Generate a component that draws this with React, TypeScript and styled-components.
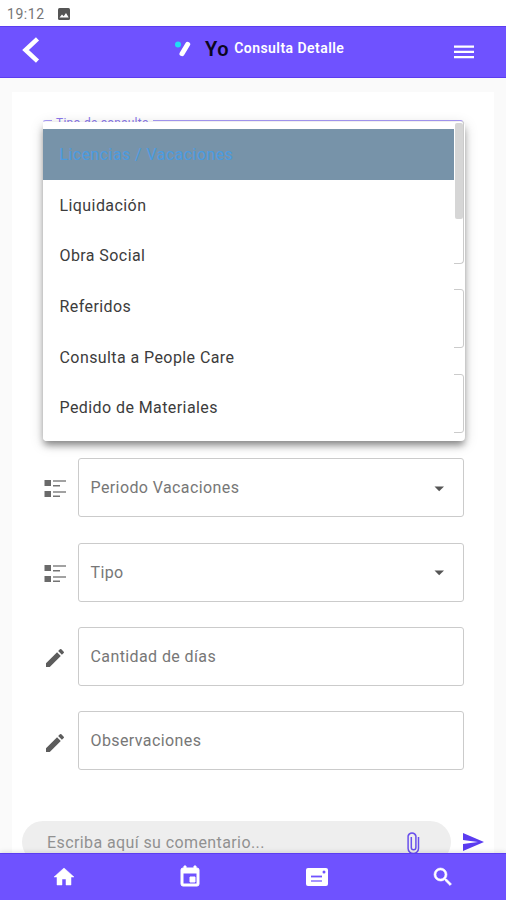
import React from "react";
import styled, { createGlobalStyle } from "styled-components";

const Global = createGlobalStyle`
  * { box-sizing: border-box; }
  body { margin: 0; background: #fff; font-family: Roboto, "Liberation Sans", sans-serif; }
`;

const Screen = styled.div`
  width: 506px;
  height: 900px;
  display: flex;
  flex-direction: column;
  overflow: hidden;
  background: #fafafa;
`;

const StatusBar = styled.div`
  flex: 0 0 26px;
  display: flex;
  align-items: center;
  gap: 13px;
  padding: 1px 0 0 7px;
  background: #fff;
  color: #767676;
  font-size: 14px;
  letter-spacing: 0.55px;
`;

const Header = styled.header`
  flex: 0 0 52px;
  display: grid;
  grid-template-columns: 174px 1fr 53px;
  align-items: center;
  background: #6f52ff;
  border-top: 1px solid #5b3df0;
  border-bottom: 1px solid #5b3df0;
  color: #fff;
`;

const BackButton = styled.button`
  display: flex;
  padding: 0 0 5px 22px;
  border: 0;
  background: none;
`;

const MenuButton = styled.button`
  display: flex;
  padding: 0;
  border: 0;
  background: none;
`;

const Brand = styled.div`
  display: flex;
  align-items: center;
  height: 42px;
  padding-bottom: 6px;
`;

const BrandName = styled.span`
  margin-left: 13px;
  color: #0b0620;
  font-size: 20px;
  font-weight: 600;
  letter-spacing: 0.6px;
`;

const Title = styled.h1`
  margin: 0 0 0 5px;
  padding-bottom: 2px;
  font-size: 14px;
  font-weight: 600;
  letter-spacing: 0.45px;
  white-space: nowrap;
`;

const Main = styled.main`
  flex: 1;
  min-height: 0;
  overflow: hidden;
  padding: 14px 12px 0;
`;

const Card = styled.section`
  height: 800px;
  padding: 29px 30px 0 30px;
  background: #fff;
`;

const Form = styled.div`
  position: relative;
  display: flex;
  flex-direction: column;
  gap: 25.4px;
`;

const FieldRow = styled.div`
  display: grid;
  grid-template-columns: 36px 386px;
  align-items: center;
  height: 59px;
`;

const FieldIcon = styled.span<{ $select: boolean }>`
  display: flex;
  padding: ${(p) => (p.$select ? "1px" : "4px")} 0 0 1px;
`;

const Outline = styled.div`
  display: flex;
  align-items: center;
  justify-content: space-between;
  height: 59px;
  padding: 0 18px 0 11.5px;
  border: 1px solid #cbcbcb;
  border-radius: 3px;
  color: #777;
  font-size: 16px;
  letter-spacing: 0.4px;
`;

const ActiveOutline = styled.fieldset`
  width: 422px;
  height: 149px;
  margin: -6px 0 0;
  padding: 0 0 0 9px;
  border: 1px solid;
  border-color: #a99bf8 #cbcbcb #cbcbcb transparent;
  border-radius: 4px;
`;

const ActiveLabel = styled.legend`
  height: 11px;
  padding: 0 4px;
  color: #8b78ec;
  font-size: 12px;
  line-height: 16px;
  letter-spacing: 0.25px;
`;

const Popup = styled.div`
  position: absolute;
  top: 1px;
  left: 1px;
  display: flex;
  width: 422px;
  height: 319px;
  border-radius: 4px;
  box-shadow: 0 5px 7px -1px rgba(0, 0, 0, 0.4), 0 3px 14px rgba(0, 0, 0, 0.17);
`;

const Options = styled.div`
  width: 411px;
  padding-top: 7px;
  background: #fff;
  border-radius: 0 0 0 4px;
`;

const Option = styled.div<{ $selected?: boolean }>`
  height: 50.7px;
  padding: 0 16.5px;
  line-height: 51px;
  font-size: 16px;
  letter-spacing: 0.42px;
  color: ${(p) => (p.$selected ? "#4b9be0" : "#3c3c3c")};
  background: ${(p) => (p.$selected ? "#7793a9" : "transparent")};
`;

const ScrollThumb = styled.div`
  width: 8px;
  height: 96px;
  margin: 1px 0 0 1px;
  border-radius: 2px;
  background: #d6d6d6;
`;

const Composer = styled.div`
  display: flex;
  align-items: center;
  gap: 10px;
  width: 465px;
  margin: 51px 0 0 -20px;
`;

const CommentBox = styled.div`
  flex: 0 0 429px;
  display: flex;
  align-items: center;
  justify-content: space-between;
  height: 42px;
  padding: 0 30px 0 25px;
  border-radius: 24px;
  background: #eee;
  color: #919191;
  font-size: 16px;
  letter-spacing: 0.4px;
`;

const NavBar = styled.nav`
  z-index: 1;
  flex: 0 0 47px;
  display: grid;
  grid-template-columns: repeat(4, 1fr);
  justify-items: center;
  align-items: center;
  padding-left: 1px;
  background: #6f52ff;
  border-top: 1px solid #5b3df0;
  box-shadow: 0 -1px 5px rgba(0, 0, 0, 0.12);
  color: #fff;
`;

const Glyph = ({ d, color = "currentColor", weight = 0 }: { d: string; color?: string; weight?: number }) => (
  <svg width="24" height="24" viewBox="0 0 24 24" fill={color} stroke={color} strokeWidth={weight}>
    <path d={d} />
  </svg>
);

const pencil =
  "M3 17.25V21h3.75L17.81 9.94l-3.75-3.75L3 17.25zM20.71 7.04a1 1 0 0 0 0-1.41l-2.34-2.34a1 1 0 0 0-1.41 0l-1.83 1.83 3.75 3.75 1.83-1.83z";

const ListIcon = () => (
  <svg width="24" height="20" viewBox="0 0 24 20">
    <path fill="#6a6a6a" d="M1.5 2h6.5v6H1.5zM1.5 13h6.5v6H1.5z" />
    <path fill="#a2a2a2" d="M10 2h13v2H10zM10 13h13v2H10z" />
    <path fill="#747474" d="M10 7h7v1.5h-7zM10 17.5h7v1.5h-7z" />
  </svg>
);

const fields = [
  { label: "", select: true },
  { label: "", select: true },
  { label: "Periodo Vacaciones", select: true },
  { label: "Tipo", select: true },
  { label: "Cantidad de días", select: false },
  { label: "Observaciones", select: false },
];

const options = [
  "Licencias / Vacaciones",
  "Liquidación",
  "Obra Social",
  "Referidos",
  "Consulta a People Care",
  "Pedido de Materiales",
];

export default function App() {
  return (
    <>
      <Global />
      <Screen>
        <StatusBar>
          19:12
          <svg width="12" height="12" viewBox="0 0 12 12">
            <rect width="12" height="12" rx="1.5" fill="#555" />
            <path d="M1.5 9.5 4 6.5l1.7 1.8L8 5l2.7 4.5z" fill="#fff" />
          </svg>
        </StatusBar>
        <Header>
          <BackButton aria-label="Volver">
            <svg width="18" height="26" viewBox="0 0 18 26" fill="none" stroke="#fff" strokeWidth="4.5">
              <path d="M15.5 1.8 3.5 13l12 11.2" />
            </svg>
          </BackButton>
          <Brand>
            <svg width="18" height="18" viewBox="0 0 18 18">
              <circle cx="4" cy="4.5" r="3" fill="#20dcf5" />
              <path d="M8 13.7 13.7 4.3" stroke="#fff" strokeWidth="5" strokeLinecap="round" />
            </svg>
            <BrandName>Yo</BrandName>
            <Title>Consulta Detalle</Title>
          </Brand>
          <MenuButton aria-label="Menú">
            <svg width="22" height="16" viewBox="0 0 22 16">
              <path d="M1 1.5h20v2.3H1zM1 6.7h20V9H1zM1 11.9h20v2.3H1z" fill="#fff" />
            </svg>
          </MenuButton>
        </Header>
        <Main>
          <Card>
            <Form>
              <ActiveOutline>
                <ActiveLabel>Tipo de consulta</ActiveLabel>
              </ActiveOutline>
              {fields.map((f, i) => (
                <FieldRow key={i}>
                  <FieldIcon $select={f.select}>
                    {f.select ? <ListIcon /> : <Glyph d={pencil} color="#5c5c5c" />}
                  </FieldIcon>
                  <Outline>
                    {f.label}
                    {f.select && f.label && (
                      <svg width="12" height="8" viewBox="0 0 12 8">
                        <path d="M1.5 2.5h9.5L6.2 7.2z" fill="#555" />
                      </svg>
                    )}
                  </Outline>
                </FieldRow>
              ))}
              <Popup>
                <Options>
                  {options.map((o, i) => (
                    <Option key={o} $selected={i === 0}>
                      {o}
                    </Option>
                  ))}
                </Options>
                <ScrollThumb />
              </Popup>
            </Form>
            <Composer>
              <CommentBox>
                Escriba aquí su comentario...
                <svg width="16" height="25" viewBox="0 0 16 25" fill="none" stroke="#6a50ec" strokeWidth="1.5">
                  <path d="M13.5 7v11.5a5.2 5 0 0 1-10.4 0V6a4 4 0 0 1 7.8 0v11.5a2.3 2.3 0 0 1-4.6 0V7" />
                </svg>
              </CommentBox>
              <Glyph d="M2 21 23 12 2 3v7l15 2-15 2z" color="#5b3cf0" />
            </Composer>
          </Card>
        </Main>
        <NavBar>
          <Glyph d="M10 20v-6h4v6h5v-8h3L12 3 2 12h3v8z" weight={0.5} />
          <Glyph
            d="M17 12h-5v5h5v-5zM16 1v2H8V1H6v2H5a2 2 0 0 0-2 2v14a2 2 0 0 0 2 2h14a2 2 0 0 0 2-2V5a2 2 0 0 0-2-2h-1V1h-2zm3 18H5V8h14v11z"
            weight={1}
          />
          <svg width="24" height="24" viewBox="0 0 24 24">
            <rect x="1" y="3" width="22" height="18" rx="2" fill="#fff" />
            <path d="M6 11.5h11" stroke="#6f52ff" strokeWidth="1.8" />
            <path d="M6 16h11" stroke="#a594ff" strokeWidth="2" />
            <circle cx="19" cy="7" r="1.5" fill="#6f52ff" />
          </svg>
          <Glyph
            d="M15.5 14h-.79l-.28-.27A6.47 6.47 0 0 0 16 9.5 6.5 6.5 0 1 0 9.5 16c1.61 0 3.09-.59 4.23-1.57l.27.28v.79l5 4.99L20.49 19l-4.99-5zm-6 0a4.5 4.5 0 1 1 0-9 4.5 4.5 0 0 1 0 9z"
            weight={0.6}
          />
        </NavBar>
      </Screen>
    </>
  );
}
